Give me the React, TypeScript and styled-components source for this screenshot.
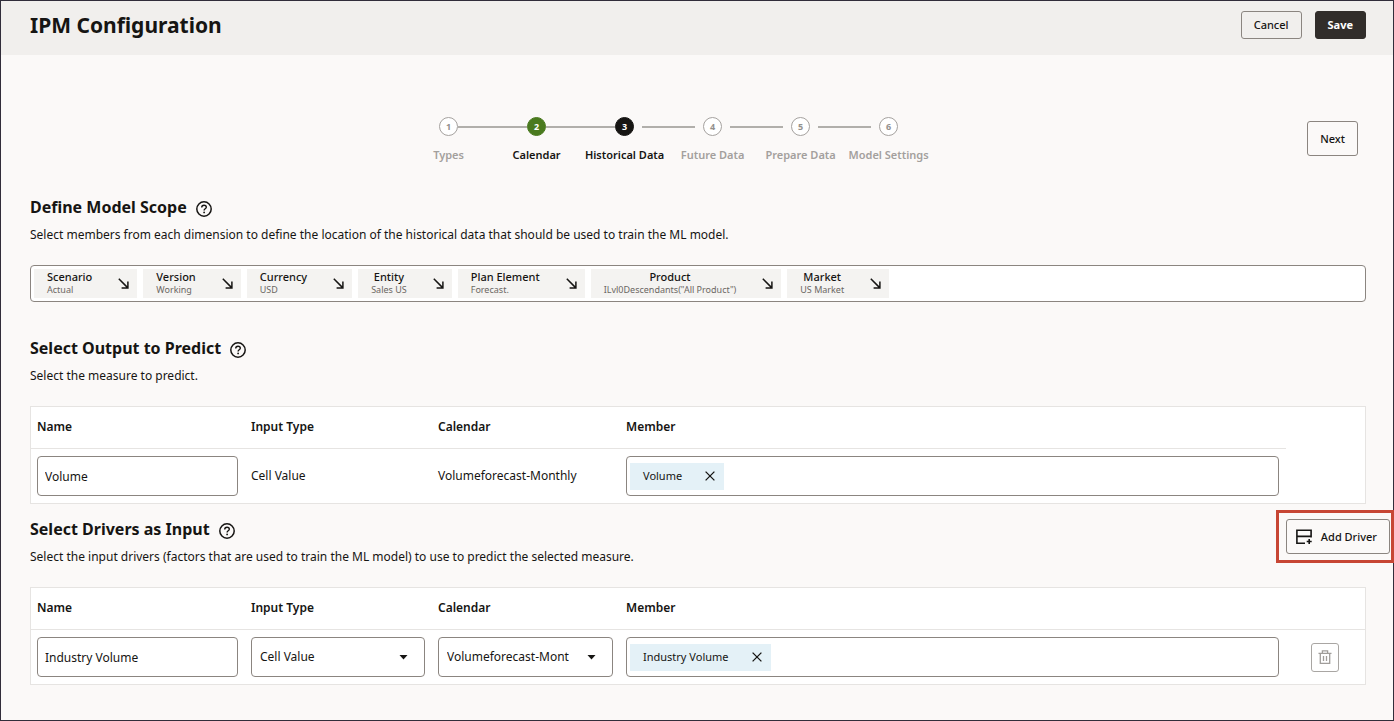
import React from "react";
import styled, { createGlobalStyle, css } from "styled-components";

const ink = "#161513";
const outline = "#8b8580";

const GlobalStyle = createGlobalStyle`
  *, *::before, *::after { box-sizing: border-box; }
  body { margin: 0; background: #fbf9f8; }
  body, button, input, select {
    font-family: "Noto Sans", "Open Sans", sans-serif;
    color: ${ink};
  }
`;

const Page = styled.div`
  min-height: 100vh;
  display: flex;
  flex-direction: column;
  border: 1px solid #312d3a;
  background: #fbf9f8;
`;

const TopBar = styled.header`
  display: flex;
  align-items: flex-start;
  justify-content: space-between;
  height: 54px;
  padding: 10px 27px 0 29px;
  background: #f1efed;
`;

const Title = styled.h1`
  margin: 0;
  font-size: 21px;
  line-height: 28px;
  font-weight: 700;
`;

const Actions = styled.div`
  display: flex;
  gap: 13px;
`;

const Button = styled.button<{ $primary?: boolean; $tall?: boolean }>`
  display: inline-flex;
  align-items: center;
  justify-content: center;
  height: ${(p) => (p.$tall ? 35 : 28)}px;
  padding: 0 12px;
  border: 1px solid ${(p) => (p.$primary ? "#312d2a" : outline)};
  border-radius: 3px;
  background: ${(p) => (p.$primary ? "#312d2a" : "transparent")};
  color: ${(p) => (p.$primary ? "#ffffff" : ink)};
  font-size: 11px;
  line-height: 16px;
  font-weight: ${(p) => (p.$primary ? 700 : 500)};
  white-space: nowrap;
`;

const TrainRow = styled.div`
  display: flex;
  align-items: flex-start;
  padding: 62px 35px 25px 29px;
`;

const Train = styled.ol`
  display: grid;
  grid-template-columns: repeat(6, 88px);
  justify-content: center;
  flex: 1;
  margin: 0;
  padding: 0;
  list-style: none;
`;

const Step = styled.li`
  display: flex;
  flex-direction: column;
  gap: 11px;
`;

const Track = styled.div`
  display: grid;
  grid-template-columns: 1fr 19px 1fr;
  align-items: center;
`;

type LineKind = "none" | "joined" | "apart";
const Line = styled.span<{ $kind: LineKind; $side: "left" | "right" }>`
  height: 2px;
  background: ${(p) => (p.$kind === "none" ? "transparent" : "#b1afab")};
  ${(p) =>
    p.$kind === "apart" &&
    (p.$side === "left"
      ? css`margin-right: 8px;`
      : css`margin-left: 8px;`)}
`;

type StepState = "idle" | "done" | "current";
const stepFill = { idle: "#ffffff", done: "#4a7a1f", current: "#161513" };

const Circle = styled.span<{ $state: StepState }>`
  display: flex;
  align-items: center;
  justify-content: center;
  height: 19px;
  border-radius: 50%;
  border: 1px solid ${(p) => (p.$state === "idle" ? "#a5a29f" : stepFill[p.$state])};
  background: ${(p) => stepFill[p.$state]};
  color: ${(p) => (p.$state === "idle" ? "#93908d" : "#ffffff")};
  font-size: 9px;
  line-height: 12px;
  font-weight: 700;
`;

const StepLabel = styled.span<{ $state: StepState }>`
  text-align: center;
  white-space: nowrap;
  font-size: 11px;
  line-height: 16px;
  font-weight: 600;
  color: ${(p) => (p.$state === "idle" ? "#a3a09d" : ink)};
`;

const NextSlot = styled.div`
  padding-top: 4px;
`;

const Section = styled.section<{ $gap: number }>`
  margin-top: ${(p) => p.$gap}px;
`;

const SectionHead = styled.div`
  display: flex;
  align-items: flex-start;
  justify-content: space-between;
  padding-left: 29px;
`;

const HeadText = styled.div`
  padding: 7px 0 20px;
`;

const HeadLine = styled.div`
  display: flex;
  align-items: center;
  gap: 9px;
  margin-bottom: 6px;
`;

const Heading = styled.h2`
  margin: 0;
  font-size: 16px;
  line-height: 24px;
  font-weight: 700;
`;

const HelpButton = styled.button`
  display: flex;
  padding: 3px 0 0;
  border: 0;
  background: none;
`;

const Note = styled.p`
  margin: 0;
  font-size: 12px;
  line-height: 20px;
`;

const Body = styled.div`
  padding: 0 27px 0 29px;
`;

const ScopeBar = styled.div`
  display: flex;
  gap: 6px;
  height: 37px;
  padding: 3px;
  border: 1px solid ${outline};
  border-radius: 4px;
  background: #ffffff;
`;

const ScopeChip = styled.button`
  display: flex;
  align-items: center;
  gap: 26px;
  height: 29px;
  padding: 0 8px 0 13px;
  border: 0;
  background: #f4f3f1;
  text-align: left;
`;

const ChipText = styled.span`
  display: flex;
  flex-direction: column;
  padding-bottom: 2px;
`;

const ChipName = styled.span`
  text-align: center;
  font-size: 11px;
  line-height: 14px;
  font-weight: 500;
`;

const ChipValue = styled.span`
  font-size: 9px;
  line-height: 12px;
  color: #6b6763;
`;

const Table = styled.table`
  width: 100%;
  table-layout: fixed;
  border-collapse: separate;
  border-spacing: 0;
  border: 1px solid #e6e4e2;
  background: #ffffff;
  font-size: 12px;
  line-height: 20px;
`;

const Col = styled.col<{ $width?: number }>`
  ${(p) => p.$width && css`width: ${p.$width}px;`}
`;

const HeadCell = styled.th<{ $plain?: boolean }>`
  height: 42px;
  padding: 0 7px 2px 6px;
  border-bottom: ${(p) => (p.$plain ? "0" : "1px solid #e6e4e2")};
  text-align: left;
  font-weight: 600;
`;

const Cell = styled.td<{ $center?: boolean }>`
  height: 54px;
  padding: 0 7px 0 6px;
  text-align: ${(p) => (p.$center ? "center" : "left")};
`;

const field = css`
  width: 100%;
  height: 40px;
  border: 1px solid ${outline};
  border-radius: 4px;
  background: #ffffff;
  font-size: 12px;
  line-height: 20px;
`;

const TextInput = styled.input`
  ${field}
  display: block;
  padding: 0 7px;
`;

const SelectWrap = styled.div`
  position: relative;
`;

const Select = styled.select`
  ${field}
  display: block;
  appearance: none;
  padding: 0 43px 0 8px;
`;

const Caret = styled.svg`
  position: absolute;
  right: 17px;
  top: 18px;
  pointer-events: none;
`;

const MemberField = styled.div`
  ${field}
  display: flex;
  align-items: center;
  padding: 0 3px;
`;

const Tag = styled.span`
  display: flex;
  align-items: center;
  gap: 23px;
  height: 27px;
  padding: 0 9px 0 13px;
  background: #e4f1f7;
  font-size: 11px;
  line-height: 16px;
`;

const IconButton = styled.button`
  display: flex;
  padding: 0;
  border: 0;
  background: none;
`;

const TrashButton = styled.button`
  display: inline-flex;
  align-items: center;
  justify-content: center;
  width: 28px;
  height: 29px;
  padding: 0;
  border: 1px solid #a9a6a3;
  border-radius: 3px;
  background: transparent;
  vertical-align: middle;
`;

const Highlight = styled.div`
  margin: 0 -1px 0 0;
  padding: 6px 1px 6px 7px;
  border: 3px solid #c74634;
`;

const AddIcon = styled.svg`
  margin: 0 8px 0 -3px;
`;

const HelpIcon = () => (
  <svg width="16" height="16" viewBox="0 0 16 16" fill="none" stroke={ink}>
    <circle cx="8" cy="8" r="7.2" strokeWidth="1.5" />
    <path d="M5.7 6.5C5.7 5.1 6.7 4.2 8 4.2s2.3.8 2.3 2c0 1.5-2.2 1.6-2.2 3.2" strokeWidth="1.4" />
    <circle cx="8.1" cy="11.4" r=".9" fill={ink} stroke="none" />
  </svg>
);

const ArrowIcon = () => (
  <svg width="11" height="11" viewBox="0 0 11 11" fill="none" stroke={ink} strokeWidth="1.5">
    <path d="M.8.8 9.6 9.6M3.6 9.9h6.3V3.6" />
  </svg>
);

const CloseIcon = () => (
  <svg width="10" height="10" viewBox="0 0 10 10" stroke={ink} strokeWidth="1.3">
    <path d="M.6.6l8.8 8.8M9.4.6L.6 9.4" />
  </svg>
);

const TrashIcon = () => (
  <svg width="14" height="14" viewBox="0 0 14 14" fill="none" stroke="#a09d9a" strokeWidth="1.3">
    <path d="M.5 3.4h13M4.4 3.2V.8h5.2v2.4M2.3 3.6v9.7h9.4V3.6M5.5 6v5M8.5 6v5" />
  </svg>
);

const CaretIcon = () => (
  <Caret width="9" height="5" viewBox="0 0 9 5" fill={ink} aria-hidden="true">
    <path d="M.5 0h8L4.5 4.6z" />
  </Caret>
);

const steps: { label: string; state: StepState }[] = [
  { label: "Types", state: "idle" },
  { label: "Calendar", state: "done" },
  { label: "Historical Data", state: "current" },
  { label: "Future Data", state: "idle" },
  { label: "Prepare Data", state: "idle" },
  { label: "Model Settings", state: "idle" },
];
const currentStep = 2;

const scope = [
  ["Scenario", "Actual"],
  ["Version", "Working"],
  ["Currency", "USD"],
  ["Entity", "Sales US"],
  ["Plan Element", "Forecast."],
  ["Product", 'ILvl0Descendants("All Product")'],
  ["Market", "US Market"],
];

const lineAfter = (i: number): LineKind =>
  i < 0 || i >= steps.length - 1 ? "none" : i < currentStep ? "joined" : "apart";

const Columns = () => (
  <colgroup>
    <Col $width={214} />
    <Col $width={187} />
    <Col $width={188} />
    <Col />
    <Col $width={79} />
  </colgroup>
);

const HeaderRow = ({ plainEnd }: { plainEnd?: boolean }) => (
  <thead>
    <tr>
      <HeadCell scope="col">Name</HeadCell>
      <HeadCell scope="col">Input Type</HeadCell>
      <HeadCell scope="col">Calendar</HeadCell>
      <HeadCell scope="col">Member</HeadCell>
      <HeadCell as="td" $plain={plainEnd} />
    </tr>
  </thead>
);

const SectionTitle = ({ title, note }: { title: string; note: string }) => (
  <HeadText>
    <HeadLine>
      <Heading>{title}</Heading>
      <HelpButton type="button" aria-label={`Help: ${title}`}>
        <HelpIcon />
      </HelpButton>
    </HeadLine>
    <Note>{note}</Note>
  </HeadText>
);

const Member = ({ name }: { name: string }) => (
  <MemberField>
    <Tag>
      {name}
      <IconButton type="button" aria-label={`Remove ${name}`}>
        <CloseIcon />
      </IconButton>
    </Tag>
  </MemberField>
);

const Dropdown = ({ label, value }: { label: string; value: string }) => (
  <SelectWrap>
    <Select aria-label={label} defaultValue={value}>
      <option value={value}>{value}</option>
    </Select>
    <CaretIcon />
  </SelectWrap>
);

export default function App() {
  return (
    <Page>
      <GlobalStyle />
      <TopBar>
        <Title>IPM Configuration</Title>
        <Actions>
          <Button type="button">Cancel</Button>
          <Button type="button" $primary>Save</Button>
        </Actions>
      </TopBar>
      <main>
        <TrainRow>
          <Train>
            {steps.map((s, i) => (
              <Step key={s.label} aria-current={i === currentStep ? "step" : undefined}>
                <Track>
                  <Line $kind={lineAfter(i - 1)} $side="left" />
                  <Circle $state={s.state}>{i + 1}</Circle>
                  <Line $kind={lineAfter(i)} $side="right" />
                </Track>
                <StepLabel $state={s.state}>{s.label}</StepLabel>
              </Step>
            ))}
          </Train>
          <NextSlot>
            <Button type="button" $tall>Next</Button>
          </NextSlot>
        </TrainRow>

        <Section $gap={0}>
          <SectionHead>
            <SectionTitle
              title="Define Model Scope"
              note="Select members from each dimension to define the location of the historical data that should be used to train the ML model."
            />
          </SectionHead>
          <Body>
            <ScopeBar>
              {scope.map(([name, value]) => (
                <ScopeChip type="button" key={name}>
                  <ChipText>
                    <ChipName>{name}</ChipName>
                    <ChipValue>{value}</ChipValue>
                  </ChipText>
                  <ArrowIcon />
                </ScopeChip>
              ))}
            </ScopeBar>
          </Body>
        </Section>

        <Section $gap={27}>
          <SectionHead>
            <SectionTitle title="Select Output to Predict" note="Select the measure to predict." />
          </SectionHead>
          <Body>
            <Table>
              <Columns />
              <HeaderRow plainEnd />
              <tbody>
                <tr>
                  <Cell>
                    <TextInput aria-label="Output name" defaultValue="Volume" />
                  </Cell>
                  <Cell>Cell Value</Cell>
                  <Cell>Volumeforecast-Monthly</Cell>
                  <Cell>
                    <Member name="Volume" />
                  </Cell>
                  <Cell />
                </tr>
              </tbody>
            </Table>
          </Body>
        </Section>

        <Section $gap={6}>
          <SectionHead>
            <SectionTitle
              title="Select Drivers as Input"
              note="Select the input drivers (factors that are used to train the ML model) to use to predict the selected measure."
            />
            <Highlight>
              <Button type="button" $tall>
                <AddIcon width="17" height="16" viewBox="0 0 17 16" fill="none" stroke={ink} strokeWidth="1.6" aria-hidden="true">
                  <path d="M9 14.2H.9V1.2h14.2v6.2H.9M15.1 7.4v1.2M13.2 10v5M10.7 12.5h5" />
                </AddIcon>
                Add Driver
              </Button>
            </Highlight>
          </SectionHead>
          <Body>
            <Table>
              <Columns />
              <HeaderRow />
              <tbody>
                <tr>
                  <Cell>
                    <TextInput aria-label="Driver name" defaultValue="Industry Volume" />
                  </Cell>
                  <Cell>
                    <Dropdown label="Input Type" value="Cell Value" />
                  </Cell>
                  <Cell>
                    <Dropdown label="Calendar" value="Volumeforecast-Monthly" />
                  </Cell>
                  <Cell>
                    <Member name="Industry Volume" />
                  </Cell>
                  <Cell $center>
                    <TrashButton type="button" aria-label="Delete driver">
                      <TrashIcon />
                    </TrashButton>
                  </Cell>
                </tr>
              </tbody>
            </Table>
          </Body>
        </Section>
      </main>
    </Page>
  );
}
